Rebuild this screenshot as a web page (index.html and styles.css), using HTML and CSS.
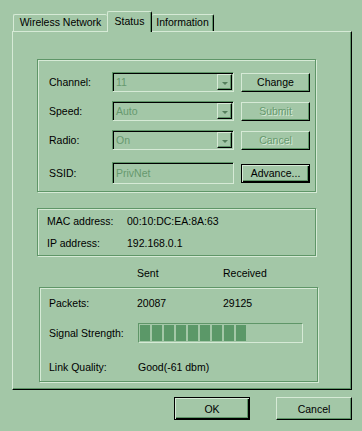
FILE: index.html
```html
<!DOCTYPE html>
<html lang="en">
<head>
	<meta charset="UTF-8">
	<title>Status</title>
	<link rel="stylesheet" href="styles.css">
</head>
<body>

	<div class="dialog">

		<div class="tabs">
			<div class="tab tab-first">Wireless Network</div>
			<div class="tab tab-active">Status</div>
			<div class="tab tab-last">Information</div>
		</div>

		<div class="panel">

			<div class="group settings">
				<div class="row">
					<span class="label">Channel:</span>
					<div class="combo"><span class="value">11</span><span class="drop"><i class="arrow"></i></span></div>
					<button class="btn">Change</button>
				</div>
				<div class="row">
					<span class="label">Speed:</span>
					<div class="combo"><span class="value">Auto</span><span class="drop"><i class="arrow"></i></span></div>
					<button class="btn" disabled>Submit</button>
				</div>
				<div class="row">
					<span class="label">Radio:</span>
					<div class="combo"><span class="value">On</span><span class="drop"><i class="arrow"></i></span></div>
					<button class="btn" disabled>Cancel</button>
				</div>
				<div class="row row-ssid">
					<span class="label">SSID:</span>
					<div class="combo field"><span class="value">PrivNet</span></div>
					<button class="btn btn-default">Advance...</button>
				</div>
			</div>

			<div class="group info">
				<div class="info-row"><span>MAC address:</span><span>00:10:DC:EA:8A:63</span></div>
				<div class="info-row"><span>IP address:</span><span>192.168.0.1</span></div>
			</div>

			<div class="stats-head"><span></span><span>Sent</span><span>Received</span></div>

			<div class="group stats">
				<div class="stats-row"><span>Packets:</span><span>20087</span><span>29125</span></div>
				<div class="stats-row signal">
					<span>Signal Strength:</span>
					<div class="bar">
						<i></i><i></i><i></i><i></i><i></i><i></i><i></i><i></i><i></i>
					</div>
				</div>
				<div class="stats-row quality"><span>Link Quality:</span><span class="wide">Good(-61 dbm)</span></div>
			</div>

		</div>

		<div class="actions">
			<button class="btn btn-default btn-wide">OK</button>
			<button class="btn btn-wide">Cancel</button>
		</div>

	</div>

</body>
</html>
```

FILE: styles.css
```css
body {
	margin: 0;
	background: #a3c7a7;
	font-family: "Liberation Sans", Arial, sans-serif;
	font-size: 10.5px;
	color: #000000;
}

.dialog {
	padding-top: 11px;
}

/* tab strip */

.tabs {
	display: flex;
	align-items: flex-end;
	height: 20px;
	margin-left: 13px;
}

.tab {
	box-sizing: border-box;
	height: 17px;
	line-height: 15px;
	text-align: center;
	border-top: 1px solid #d6ead6;
	border-left: 1px solid #d6ead6;
	border-right: 1px solid #000000;
	border-top-left-radius: 2px;
	border-top-right-radius: 2px;
	box-shadow: inset -1px 0 0 #5f9668;
}

.tab-first {
	width: 94px;
	border-right: 0;
	box-shadow: none;
}

.tab-active {
	position: relative;
	z-index: 1;
	width: 45px;
	height: 21px;
	line-height: 18px;
	margin-bottom: -1px;
	background: #a3c7a7;
}

.tab-last {
	width: 62px;
	border-left: 0;
}

/* page */

.panel {
	box-sizing: border-box;
	height: 359px;
	margin: 0 10px 0 12px;
	padding: 27px 0 0 24px;
	border-top: 1px solid #d6ead6;
	border-left: 1px solid #d6ead6;
	border-right: 1px solid #000000;
	border-bottom: 1px solid #000000;
	box-shadow: inset -1px -1px 0 #5f9668;
}

.group {
	box-sizing: border-box;
	width: 279px;
	border: 1px solid #5f9668;
	box-shadow: inset 1px 1px 0 #d6ead6, 1px 1px 0 #d6ead6;
}

.settings {
	display: flex;
	flex-direction: column;
	gap: 9px;
	padding: 12px 0 7px 11px;
}

.row {
	display: grid;
	grid-template-columns: 56px 122px 69px;
	column-gap: 7px;
	align-items: center;
	height: 20px;
}

.row-ssid {
	height: 22px;
	margin-top: 3px;
}

.combo {
	box-sizing: border-box;
	display: flex;
	align-items: center;
	height: 20px;
	padding: 0 1px 0 3px;
	border: 1px solid;
	border-color: #5f9668 #d6ead6 #d6ead6 #5f9668;
	box-shadow: inset 1px 1px 0 #000000;
	color: #66996e;
}

.combo .value {
	flex: 1;
}

.field {
	height: 22px;
}

.drop {
	box-sizing: border-box;
	display: flex;
	align-items: center;
	justify-content: center;
	width: 15px;
	height: 16px;
	border-top: 1px solid #d6ead6;
	border-left: 1px solid #d6ead6;
	border-right: 1px solid #000000;
	border-bottom: 1px solid #000000;
	box-shadow: inset -1px -1px 0 #5f9668;
}

.arrow {
	display: block;
	margin-top: 2px;
	border-left: 3px solid transparent;
	border-right: 3px solid transparent;
	border-top: 3px solid #557f5c;
}

.btn {
	box-sizing: border-box;
	height: 19px;
	padding: 0;
	font: inherit;
	color: #000000;
	background: #a3c7a7;
	border: 1px solid;
	border-color: #d6ead6 #000000 #000000 #d6ead6;
	box-shadow: inset -1px -1px 0 #5f9668;
}

.btn:disabled {
	color: #66996e;
	text-shadow: 1px 1px 0 #d6ead6;
}

.btn-default {
	border-color: #000000;
	box-shadow: inset 1px 1px 0 #d6ead6, inset -1px -1px 0 #000000, inset -2px -2px 0 #5f9668;
}

/* addresses */

.info {
	display: flex;
	flex-direction: column;
	gap: 8px;
	margin-top: 16px;
	padding: 5px 0 5px 9px;
}

.info-row {
	display: grid;
	grid-template-columns: 80px auto;
	line-height: 14px;
}

/* traffic */

.stats-head,
.stats-row {
	display: grid;
	grid-template-columns: 88px 86px auto;
	align-items: center;
	line-height: 14px;
}

.stats-head {
	margin-top: 10px;
	padding-left: 12px;
}

.stats {
	margin: 7px 0 0 2px;
	padding: 8px 0 7px 9px;
}

.signal {
	height: 20px;
	margin-top: 13px;
}

.quality {
	margin-top: 17px;
}

.wide {
	grid-column: 2 / 4;
	padding-left: 1px;
}

.bar {
	grid-column: 2 / 4;
	box-sizing: border-box;
	display: flex;
	gap: 2px;
	width: 165px;
	height: 20px;
	margin-left: 1px;
	padding: 1px;
	border: 1px solid;
	border-color: #5f9668 #d6ead6 #d6ead6 #5f9668;
}

.bar i {
	display: block;
	width: 10px;
	height: 16px;
	background: #5b9868;
}

/* dialog buttons */

.actions {
	display: flex;
	justify-content: flex-end;
	gap: 26px;
	margin: 7px 10px 0 0;
}

.btn-wide {
	width: 76px;
	height: 23px;
}
```
